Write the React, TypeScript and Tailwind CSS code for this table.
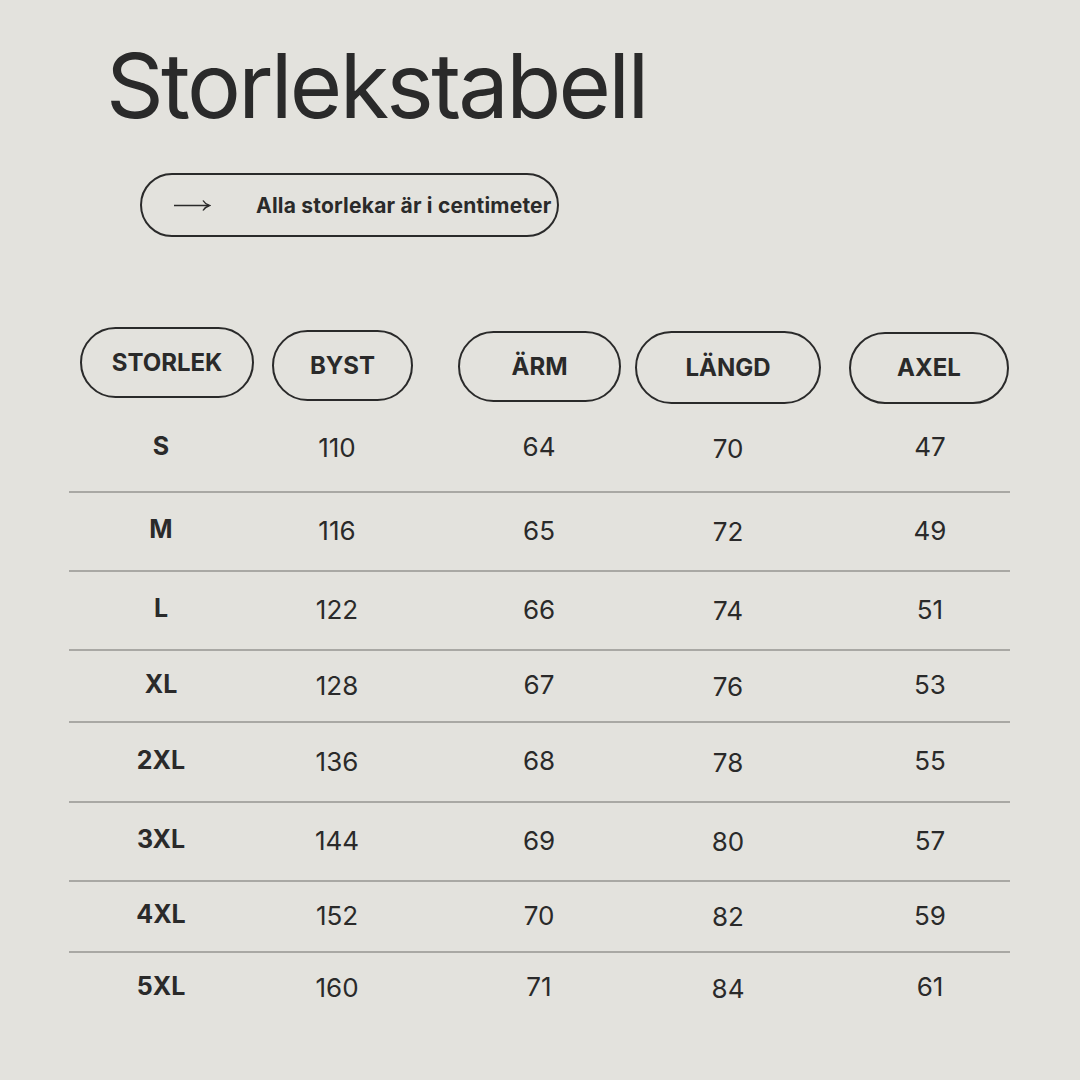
import React from "react";

const rows: { s: string; v: string[]; h: string; last?: boolean }[] = [
  { s: "S", v: ["110", "64", "70", "47"], h: "h-[88px]" },
  { s: "M", v: ["116", "65", "72", "49"], h: "h-[79px]" },
  { s: "L", v: ["122", "66", "74", "51"], h: "h-[79px]" },
  { s: "XL", v: ["128", "67", "76", "53"], h: "h-[72px]" },
  { s: "2XL", v: ["136", "68", "78", "55"], h: "h-[80px]" },
  { s: "3XL", v: ["144", "69", "80", "57"], h: "h-[79px]" },
  { s: "4XL", v: ["152", "70", "82", "59"], h: "h-[71px]" },
  { s: "5XL", v: ["160", "71", "84", "61"], h: "h-[70px]", last: true },
];

export default function App() {
  return (
    <div
      className="w-[1080px] h-[1080px] bg-[#e3e2dd] text-[#2a2a2a] overflow-hidden flex flex-col"
      style={{ fontFamily: "Inter, 'Liberation Sans', sans-serif" }}
    >
      <h1 className="pt-[41px] pl-[106px] text-[90px] leading-none font-normal tracking-[-0.03em]">
        Storlekstabell
      </h1>

      <div className="ml-[140px] mt-[42px] w-[419px] h-[64px] rounded-full border-2 border-[#2a2a2a] flex items-center">
        <svg width="38" height="14" viewBox="0 0 38 14" className="ml-[31px]" fill="none">
          <path d="M1 7.5H36" stroke="#2a2a2a" strokeWidth="1.4" />
          <path d="M30 2.5Q32 6 36.5 7.5Q32 9 30 12.5" stroke="#2a2a2a" strokeWidth="1.4" />
        </svg>
        <span className="ml-[45px] text-[21px] font-bold tracking-[0.01em] leading-none">
          Alla storlekar är i centimeter
        </span>
      </div>

      <div className="mt-[90px] flex items-start pl-[80px]">
        <div className="w-[174px] h-[71px] rounded-full border-2 border-[#2a2a2a] flex items-center justify-center text-[24px] font-bold">
          STORLEK
        </div>
        <div className="ml-[18px] mt-[3px] w-[141px] h-[71px] rounded-full border-2 border-[#2a2a2a] flex items-center justify-center text-[24px] font-bold">
          BYST
        </div>
        <div className="ml-[45px] mt-[4px] w-[163px] h-[71px] rounded-full border-2 border-[#2a2a2a] flex items-center justify-center text-[24px] font-bold">
          ÄRM
        </div>
        <div className="ml-[14px] mt-[4px] w-[186px] h-[73px] rounded-full border-2 border-[#2a2a2a] flex items-center justify-center text-[24px] font-bold">
          LÄNGD
        </div>
        <div className="ml-[28px] mt-[5px] w-[160px] h-[72px] rounded-full border-2 border-[#2a2a2a] flex items-center justify-center text-[24px] font-bold">
          AXEL
        </div>
      </div>

      <div className="ml-[69px] w-[941px] mt-px">
        {rows.map((r) => (
          <div
            key={r.s}
            className={`${r.h} grid grid-cols-[184px_168px_236px_142px_211px] items-center ${
              r.last ? "" : "border-b-2 border-[#a9a8a4]"
            }`}
          >
            <div className="text-center text-[25px] font-bold pb-[3px]">{r.s}</div>
            <div className="text-center text-[26px] pb-[2px]">{r.v[0]}</div>
            <div className="text-center text-[26px] pb-[3px]">{r.v[1]}</div>
            <div className="text-center text-[26px]">{r.v[2]}</div>
            <div className="text-center text-[26px] pl-[51px] pb-[3px]">{r.v[3]}</div>
          </div>
        ))}
      </div>
    </div>
  );
}
